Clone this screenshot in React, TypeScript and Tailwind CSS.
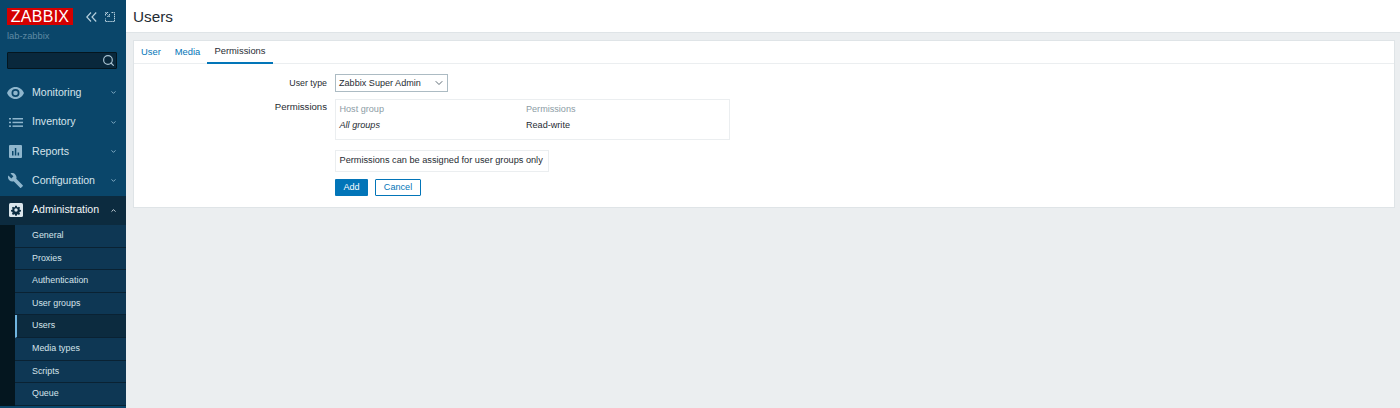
import React from "react";
import { ChevronDown, ChevronUp, Search } from "lucide-react";

const font = "font-['Liberation_Sans',Arial,sans-serif]";

const MenuIcon = ({ name }: { name: string }) => {
  if (name === "Monitoring") {
    return (
      <svg width="17" height="12" viewBox="0 0 17 12" fill="#8fb6cd">
        <path d="M8.5 0C4.6 0 1.6 2.4 0 6c1.6 3.6 4.6 6 8.5 6s6.900-2.400 8.500-6C15.400 2.400 12.400 0 8.500 0zm0 10a4 4 0 1 1 0-8 4 4 0 0 1 0 8zm0-6.300a2.300 2.300 0 1 0 0 4.600 2.300 2.300 0 0 0 0-4.600z" />
      </svg>
    );
  }
  if (name === "Inventory") {
    return (
      <svg width="14" height="9" viewBox="0 0 14 9" fill="#8fb6cd">
        <rect x="0" y="0" width="2" height="1.500" />
        <rect x="3.500" y="0" width="10.500" height="1.500" />
        <rect x="0" y="3.700" width="2" height="1.500" />
        <rect x="3.500" y="3.700" width="10.500" height="1.500" />
        <rect x="0" y="7.400" width="2" height="1.500" />
        <rect x="3.500" y="7.400" width="10.500" height="1.500" />
      </svg>
    );
  }
  if (name === "Reports") {
    return (
      <svg width="13" height="13" viewBox="0 0 13 13">
        <rect width="13" height="13" rx="1" fill="#8fb6cd" />
        <rect x="3" y="6" width="1.500" height="4.500" fill="#0a466a" />
        <rect x="5.800" y="3" width="1.500" height="7.500" fill="#0a466a" />
        <rect x="8.600" y="7.500" width="1.500" height="3" fill="#0a466a" />
      </svg>
    );
  }
  if (name === "Configuration") {
    return (
      <svg width="15" height="15" viewBox="0 0 15 15" fill="#8fb6cd">
        <path d="M14.700 12.200 8.300 5.800c.5-1.500.2-3.200-1-4.400C6 .1 4.100-.3 2.500.4l2.900 2.900-2.100 2.100L.4 2.500c-.8 1.600-.4 3.500.9 4.800 1.200 1.200 2.900 1.500 4.400 1l6.400 6.400c.3.300.7.300 1 0l1.600-1.500c.3-.3.300-.7 0-1z" />
      </svg>
    );
  }
  return (
    <svg width="14" height="14" viewBox="0 0 14 14">
      <rect width="14" height="14" rx="1.500" fill="#dbe6ec" />
      <path
        d="M6 1.800h2l.3 1.500 1.100.5 1.300-.9 1.400 1.400-.9 1.300.5 1.100 1.500.3v2l-1.500.3-.5 1.100.9 1.300-1.400 1.400-1.300-.9-1.100.5-.3 1.500H6l-.3-1.500-1.100-.5-1.300.9-1.400-1.400.9-1.300-.5-1.100-1.500-.3v-2l1.500-.3.5-1.100-.9-1.300 1.400-1.400 1.300.9 1.100-.5z"
        transform="translate(1.400 1.400) scale(.8)"
        fill="#0b2c41"
      />
      <circle cx="7" cy="7" r="1.700" fill="#dbe6ec" />
    </svg>
  );
};

const menu = ["Monitoring", "Inventory", "Reports", "Configuration"];
const subItems = ["General", "Proxies", "Authentication", "User groups", "Users", "Media types", "Scripts", "Queue"];

const Sidebar = () => (
  <aside className="w-[126px] h-[408px] shrink-0 bg-[#0a466a] overflow-hidden">
    <div className="flex items-center pl-[7px] pt-[8px]">
      <div className="w-[66px] h-[17px] bg-[#d40000] text-white text-[16px] leading-[17px] tracking-[0.300px] text-center">
        ZABBIX
      </div>
      <svg className="ml-[13px]" width="11" height="10" viewBox="0 0 11 10" fill="none" stroke="#b5cfdd" strokeWidth="1.200">
        <path d="M5 .5.800 5 5 9.500M10.200.5 6 5l4.200 4.500" />
      </svg>
      <svg className="ml-[8px]" width="10" height="10" viewBox="0 0 10 10" fill="none" stroke="#b5cfdd" strokeWidth="1">
        <path d="M6.500.5h3v9h-9v-3M.5 3.500v-3h3M1 1l3.500 3.500M4.500 2v2.500H2" strokeDasharray="1.500 .6" />
      </svg>
    </div>
    <div className="pl-[7px] pt-[5px] text-[9.300px] leading-[12px] text-[#5f8aa3]">lab-zabbix</div>
    <div className="mx-[7px] mt-[10px] w-[110px] h-[17px] bg-[#09283c] border border-[#04161f] rounded-[1px] flex items-center justify-end pr-[1px]">
      <Search size={13} color="#a9c3d2" strokeWidth={2.200} />
    </div>
    <nav className="mt-[9px]">
      {menu.map((m) => (
        <div key={m} className="h-[29.400px] flex items-center text-[#d5e3ea]">
          <div className="w-[32px] flex justify-center pr-[1px]">
            <MenuIcon name={m} />
          </div>
          <span className="text-[10.600px] flex-1">{m}</span>
          <ChevronDown size={7} color="#8fb6cd" strokeWidth={3} className="mr-[9px]" />
        </div>
      ))}
      <div className="h-[29.400px] flex items-center bg-[#0c2b3f] text-[#f2f6f8]">
        <div className="w-[32px] flex justify-center pr-[1px]">
          <MenuIcon name="Administration" />
        </div>
        <span className="text-[10.600px] flex-1">Administration</span>
        <ChevronUp size={7} color="#dbe6ec" strokeWidth={3} className="mr-[9px]" />
      </div>
      <div className="flex">
        <div className="w-[15px] bg-[#04161f]" />
        <ul className="flex-1">
          {subItems.map((s) => (
            <li
              key={s}
              className={`h-[22.600px] flex items-center border-b border-[#0a2233] text-[8.900px] text-[#d5e3ea] ${
                s === "Users" ? "bg-[#0c2b3f] border-l-2 border-l-[#6fb5e0] pl-[15px]" : "bg-[#0e3754] pl-[17px]"
              }`}
            >
              {s}
            </li>
          ))}
        </ul>
      </div>
    </nav>
  </aside>
);

const PermissionsTab = () => (
  <div className="pt-[9px] text-[9.100px] text-[#1f2c33]">
    <div className="flex items-center h-[19px]">
      <label className="w-[193px] text-right pt-[2px] text-[8.800px]">User type</label>
      <div className="ml-[8px] w-[113px] h-[18px] border border-[#acbbc3] flex items-center justify-between pl-[3px] pr-[2px]">
        <span className="pt-[2px]">Zabbix Super Admin</span>
        <ChevronDown size={12} color="#4d5c66" strokeWidth={1.800} />
      </div>
    </div>
    <div className="flex mt-[7px]">
      <label className="w-[193px] text-right pt-[2px] leading-[11px] text-[9.600px]">Permissions</label>
      <div>
        <div className="ml-[8px] w-[395px] h-[41px] border border-[#ebeef0] px-[3.500px]">
          <div className="flex h-[19px] items-center text-[#8c9ca5]">
            <span className="w-[186.500px]">Host group</span>
            <span>Permissions</span>
          </div>
          <div className="flex h-[14px] items-center">
            <span className="w-[186.500px] italic">All groups</span>
            <span>Read-write</span>
          </div>
        </div>
        <div className="ml-[8px] mt-[10px] w-[214px] h-[22px] border border-[#ebeef0] px-[3.500px] flex items-center text-[9.200px]">
          Permissions can be assigned for user groups only
        </div>
        <div className="ml-[8px] mt-[7px] flex gap-[7px]">
          <button className="w-[33px] h-[17px] bg-[#0275b8] text-white rounded-[1px]">Add</button>
          <button className="w-[46px] h-[17px] bg-white border border-[#0275b8] text-[#0275b8] rounded-[1px]">Cancel</button>
        </div>
      </div>
    </div>
  </div>
);

export default function App() {
  return (
    <div className={`flex w-[1400px] h-[408px] overflow-hidden bg-[#ebeef0] ${font}`}>
      <Sidebar />
      <main className="flex-1 flex flex-col">
        <header className="h-[33px] bg-white border-b border-[#dfe4e7] pl-[7px] pt-[3px] flex items-center text-[15.300px] text-[#1f2c33]">
          Users
        </header>
        <section className="ml-[7px] mr-[5px] mt-[7px] h-[168px] bg-white border border-[#dfe4e7]">
          <div className="flex h-[23px] border-b border-[#ebeef0] text-[9.400px]">
            <div className="w-[34px] flex items-center justify-center text-[#0275b8]">User</div>
            <div className="w-[39px] flex items-center justify-center text-[#0275b8]">Media</div>
            <div className="w-[66px] flex items-center justify-center text-[#1f2c33] border-b-2 border-[#0275b8] h-[23px]">Permissions</div>
          </div>
          <PermissionsTab />
        </section>
      </main>
    </div>
  );
}
